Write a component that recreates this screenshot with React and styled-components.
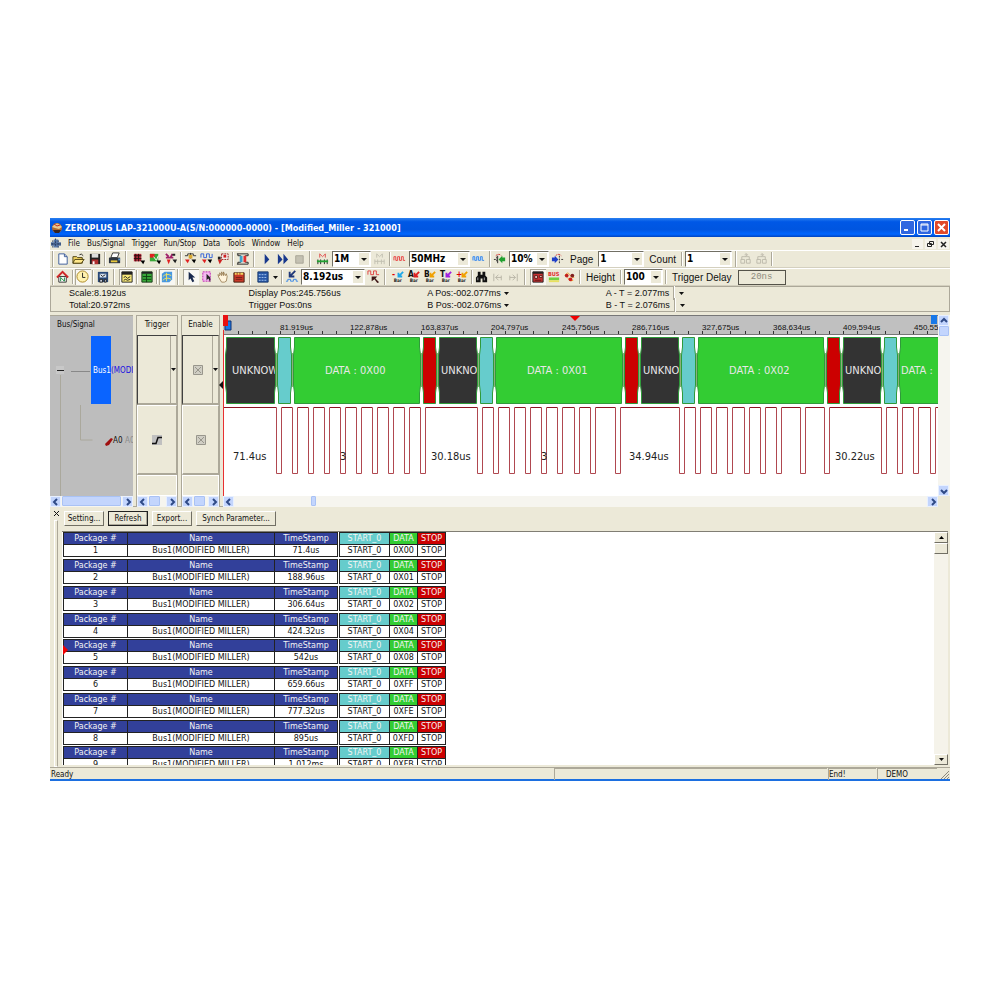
import React from 'react';
import styled, { createGlobalStyle, css } from 'styled-components';

const Colors = {
  face: '#ece9d8',
  shadow: '#aca899',
  dark: '#716f64',
  grey: '#c0c0c0',
  navy: '#32409a',
  cyan: '#66cccc',
  green: '#33cc33',
  red: '#cc0000',
  charcoal: '#333333',
  wave: '#b04850',
  waveTop: '#8c1420',
};

const Fonts = {
  ui: '"DejaVu Sans Condensed", "DejaVu Sans", sans-serif',
  wide: '"DejaVu Sans", sans-serif',
  plain: '"Liberation Sans", Arial, sans-serif',
  mono: '"Liberation Mono", monospace',
};

const GlobalStyle = createGlobalStyle`
  * {
    box-sizing: border-box;
  }
  body {
    margin: 0;
    background: #fff;
  }
  button, select, input {
    margin: 0;
    padding: 0;
    border: none;
    border-radius: 0;
    color: inherit;
    font: inherit;
    background: none;
  }
`;

const Page = styled.main`
  padding: 218px 50px;
`;

const AppWindow = styled.div`
  display: flex;
  flex-direction: column;
  background: ${Colors.face};
  border-bottom: 2px solid #1c6fe0;
  color: #111;
  font: 8px/12px ${Fonts.ui};
`;

const TitleBar = styled.header`
  display: flex;
  align-items: center;
  gap: 2px;
  height: 19px;
  padding: 0 1px;
  background: linear-gradient(#2a80f0, #0058e6 20%, #0055e0 60%, #0066ff 85%, #0044c0);
`;

const Title = styled.h1`
  flex: 1;
  margin: 0;
  color: #fff;
  font: bold 9px/16px ${Fonts.ui};
  white-space: nowrap;
`;

const CaptionButton = styled.button`
  display: flex;
  align-items: center;
  justify-content: center;
  width: 15px;
  height: 15px;
  border: 1px solid #fff;
  border-radius: 2px;
  background: ${({ $close }) => ($close ? '#e0492a' : '#2f66e0')};
`;

const MenuBar = styled.nav`
  display: flex;
  align-items: center;
  gap: 7px;
  height: 13px;
  padding: 0 1px;
`;

const MenuItem = styled.button`
  line-height: 12px;
`;

const MdiButtons = styled.div`
  display: flex;
  gap: 2px;
  margin-left: auto;
`;

const MdiButton = styled.button`
  display: flex;
  width: 11px;
  height: 10px;
  background: #f6f4ec;
`;

const Toolbar = styled.div`
  display: flex;
  align-items: center;
  height: 18px;
  border-top: 1px solid #fff;
  border-bottom: 1px solid #d4d0bf;
`;

const Grip = styled.span`
  flex: none;
  width: 2px;
  height: 16px;
  margin: 0 ${({ $tight }) => ($tight ? '1px' : '4px')} 0 2px;
  border-left: 1px solid ${Colors.shadow};
  border-right: 1px solid #fff;
`;

const Divider = styled.span`
  flex: none;
  width: 2px;
  height: 14px;
  margin: 0 1px;
  border-left: 1px solid ${Colors.shadow};
  border-right: 1px solid #fff;
`;

const ToolButton = styled.button`
  display: flex;
  flex: none;
  align-items: center;
  justify-content: center;
  width: 16px;
  height: 16px;
  ${({ $pressed }) =>
    $pressed &&
    css`
      background: #f8f7f2;
      box-shadow: inset 1px 1px ${Colors.shadow};
    `}
`;

const DropArrow = styled.button`
  display: flex;
  align-items: center;
  justify-content: center;
  width: 9px;
  height: 14px;
`;

const Combo = styled.span`
  position: relative;
  display: flex;
  flex: none;
  width: ${({ $width }) => $width}px;
  height: 16px;
  margin: 0 1px;
  border: 1px solid #fff;
  border-top-color: ${Colors.dark};
  border-left-color: ${Colors.dark};
  background: #fff;
  select {
    flex: 1;
    min-width: 0;
    padding-left: 1px;
    appearance: none;
    color: #000;
    font: bold 10px/14px ${Fonts.ui};
  }
  svg {
    position: absolute;
    top: 1px;
    right: 1px;
    pointer-events: none;
  }
`;

const ToolLabel = styled.label`
  margin: 2px 4px 0;
  font: 10px/14px ${Fonts.plain};
  white-space: nowrap;
`;

const DelayInput = styled.input`
  width: 48px;
  height: 15px;
  margin-left: 2px;
  border: 1px solid #55534a;
  color: #8c897c;
  font: 9px/12px ${Fonts.mono};
  text-align: center;
`;

const InfoBar = styled.section`
  display: grid;
  grid-template-columns: 180fr 179fr 179fr 344fr;
  height: 26px;
  padding: 0 0 0 18px;
  border: 1px solid ${Colors.shadow};
  font: 9px/12px ${Fonts.plain};
  white-space: nowrap;
`;

const InfoCell = styled.div`
  display: flex;
  align-items: center;
  gap: 3px;
  height: 12px;
`;

const Workspace = styled.section`
  display: grid;
  grid-template-columns: 83px 42px 39px 1fr;
  gap: 3px;
  height: 195px;
  padding-top: 3px;
  border-bottom: 1px solid ${Colors.shadow};
`;

const Pane = styled.div`
  display: flex;
  flex-direction: column;
  min-width: 0;
  overflow: hidden;
  background: ${({ $grey }) => ($grey ? '#bdbdbd' : Colors.face)};
  border-left: ${({ $grey }) => ($grey ? 'none' : `1px solid ${Colors.shadow}`)};
  border-right: ${({ $grey }) => ($grey ? 'none' : `1px solid ${Colors.shadow}`)};
`;

const PaneHead = styled.div`
  flex: none;
  height: 20px;
  padding: ${({ $left }) => ($left ? '0 7px' : 0)};
  border-top: 1px solid ${Colors.shadow};
  font: 8px/18px ${Fonts.ui};
  text-align: ${({ $left }) => ($left ? 'left' : 'center')};
`;

const SignalCell = styled.div`
  display: flex;
  flex: none;
  align-items: center;
  justify-content: center;
  height: 70px;
  border: 1px solid #fff;
  border-right-color: ${Colors.shadow};
  border-bottom: 2px solid ${Colors.shadow};
  ${({ $sunken }) =>
    $sunken &&
    css`
      border-top-color: #404040;
      border-left-color: #404040;
    `}
`;

const CellValue = styled.div`
  display: flex;
  flex: 1;
  align-items: center;
  justify-content: center;
  align-self: stretch;
  border-right: 1px solid ${Colors.shadow};
`;

const EmptyCell = styled.div`
  flex: 1;
  border: 1px solid #fff;
`;

const BusTree = styled.svg`
  display: block;
  flex: 1;
  width: 100%;
`;

const ScrollBar = styled.div`
  display: flex;
  flex: none;
  flex-direction: ${({ $vertical }) => ($vertical ? 'column' : 'row')};
  ${({ $vertical }) => ($vertical ? 'width: 12px;' : 'height: 11px;')}
  background: #f6f5ef;
`;

const ScrollArrow = styled.button`
  display: flex;
  flex: none;
  align-items: center;
  justify-content: center;
  width: 11px;
  height: 11px;
  border: 1px solid #e8f0ff;
  background: #c3d5fd;
`;

const ScrollTrack = styled.div`
  display: flex;
  flex: 1;
  padding: 0 1px;
`;

const ScrollThumb = styled.div`
  width: ${({ $width }) => $width};
  height: 10px;
  margin-left: ${({ $start }) => $start || '0'};
  border: 1px solid #a9c2f5;
  border-radius: 1px;
  background: #c3d5fd;
`;

const WavePane = styled.div`
  position: relative;
  display: flex;
  flex-direction: column;
  min-width: 0;
  background: #fff;
`;

const PaneHandle = styled.svg`
  position: absolute;
  top: 66px;
  left: -4px;
`;

const WaveBody = styled.div`
  display: flex;
  flex: 1;
  min-height: 0;
`;

const WaveChart = styled.svg`
  display: block;
  flex: 1;
  min-width: 0;
  height: 181px;
  overflow: hidden;
`;

const Corner = styled.span`
  flex: none;
  width: 12px;
  background: ${Colors.face};
`;

const PacketPanel = styled.section`
  display: grid;
  grid-template-columns: 12px 1fr;
  height: 260px;
  padding-top: 4px;
`;

const DockEdge = styled.div`
  display: flex;
  flex-direction: column;
  align-items: center;
`;

const DockClose = styled.button`
  display: flex;
  justify-content: center;
  width: 10px;
  height: 9px;
`;

const DockGrip = styled.span`
  flex: 1;
  width: 4px;
  border: 1px solid #fff;
  border-right-color: ${Colors.shadow};
`;

const PacketMain = styled.div`
  display: flex;
  flex-direction: column;
  min-width: 0;
`;

const ButtonRow = styled.div`
  display: flex;
  gap: 4px;
  padding: 0 2px 5px;
`;

const PushButton = styled.button`
  width: ${({ $wide }) => ($wide ? '80px' : '40px')};
  height: 15px;
  border: 1px solid #fff;
  border-right-color: ${Colors.dark};
  border-bottom-color: ${Colors.dark};
  line-height: 13px;
  white-space: nowrap;
  ${({ $default }) =>
    $default &&
    css`
      border-color: #222;
      box-shadow: inset -1px -1px ${Colors.shadow};
    `}
`;

const PacketArea = styled.div`
  display: flex;
  height: 234px;
  margin-right: 2px;
  border-top: 1px solid #807e74;
`;

const PacketList = styled.div`
  flex: 1;
  padding-left: 1px;
  overflow: hidden;
  background: #fff;
`;

const Packet = styled.div`
  position: relative;
  display: flex;
  gap: 1px;
  height: 25px;
  margin-bottom: 2px;
  &:nth-child(4n) {
    margin-bottom: 1px;
  }
`;

const PacketMark = styled.svg`
  position: absolute;
  top: 6px;
  left: 0;
`;

const PacketTable = styled.table`
  width: ${({ $width }) => $width}px;
  height: 25px;
  border-collapse: collapse;
  table-layout: fixed;
  border: 1px solid #222;
  font: 8px/11px ${Fonts.wide};
  text-align: center;
  white-space: nowrap;
  td {
    padding: 0;
    border: 1px solid #222;
    background: #fff;
  }
`;

const HeadCell = styled.th`
  width: ${({ $width }) => $width}px;
  padding: 0;
  border: 1px solid #222;
  background: ${({ $color }) => $color || Colors.navy};
  color: #f4f4f4;
  font-weight: normal;
`;

const ClassicScroll = styled.div`
  display: flex;
  flex-direction: column;
  width: 14px;
  background: #f5f3ea;
`;

const ClassicButton = styled.button`
  display: flex;
  align-items: center;
  justify-content: center;
  width: 14px;
  height: 11px;
  border: 1px solid #fff;
  border-right-color: ${Colors.dark};
  border-bottom-color: ${Colors.dark};
  background: ${Colors.face};
  &:last-child {
    margin-top: auto;
  }
`;

const StatusBar = styled.footer`
  display: grid;
  grid-template-columns: 1fr 273px 48px 60px 12px;
  gap: 1px;
  height: 12px;
  border-top: 1px solid ${Colors.shadow};
`;

const StatusCell = styled.div`
  padding-left: ${({ $indent }) => ($indent ? '8px' : 0)};
  border-left: 1px solid ${({ $flat }) => ($flat ? 'transparent' : Colors.shadow)};
  border-top: 1px solid ${({ $flat }) => ($flat ? 'transparent' : Colors.shadow)};
  line-height: 11px;
`;

const BAR_ICONS = {
  barMinus: ['-', '#e00000', '#20a8e8'],
  barA: ['A', '#111', '#e02020'],
  barB: ['B', '#111', '#f0a000'],
  barT: ['T', '#111', '#a020e0'],
  barPlus: ['+', '#e00000', '#f0a000'],
};

const squareWave = 'M1 9V5h2v4h2V5h2v4h2V5h2v4h2';

const ICONS = {
  fresh: (
    <g>
      <path d="M3 2h6l3 3v8H3z" fill="#fff" stroke="#3a5a98" />
      <path d="M9 2v3h3" fill="none" stroke="#3a5a98" />
    </g>
  ),
  open: (
    <g>
      <path d="M1 5h4l1 1h5v6H1z" fill="#f5d866" stroke="#4a4010" />
      <path d="M3 8h10l-3 4H1z" fill="#ffe88a" stroke="#4a4010" />
      <path d="M8 3q2-2 4 1" fill="none" stroke="#222" />
    </g>
  ),
  save: (
    <g>
      <path d="M2 2h11v11H2z" fill="#222" />
      <path d="M4 2h7v4H4z" fill="#ddd" />
      <path d="M4 8h7v5H4z" fill="#b03030" />
      <path d="M5 10h2v3H5z" fill="#fff" />
    </g>
  ),
  print: (
    <g>
      <path d="M5 1h7l-2 5H3z" fill="#fff" stroke="#333" />
      <path d="M1 6h12v6H1z" fill="#2c3440" />
      <path d="M3 9h7v2H3z" fill="#e8c83c" />
      <path d="M11 7h2v2h-2z" fill="#5898d0" />
    </g>
  ),
  sampling: (
    <g>
      <path d="M2 2h8v8H2z" fill="#b02838" />
      <path d="M2 4h8M2 7h8M4 2v8M7 2v8" stroke="#2a1010" />
      <path d="M9 9h5l-2 4z" fill="#000" />
    </g>
  ),
  trigProp: (
    <g>
      <path d="M2 2h9v8H2z" fill="#3aa838" />
      <path d="M2 2h5v4H2z" fill="#e02020" />
      <path d="M6 5l3 4 2-5" fill="none" stroke="#fff" />
      <path d="M9 9h5l-2 4z" fill="#000" />
    </g>
  ),
  busProp: (
    <g>
      <path d="M2 2l3 3M9 2L7 6M2 6h8" stroke="#a02068" strokeWidth="2" />
      <path d="M3 8h4l-2 5z" fill="#e02020" />
      <path d="M9 2h3v2H9zM9 8h5l-2 4z" fill="#222" />
    </g>
  ),
  trigLow: (
    <g>
      <path d="M1 4h3V2h6v2h3M7 1v6" fill="none" stroke="#333" />
      <path d="M5 3h4v4H5z" fill="#d8a830" />
      <path d="M1 8h5l-2 4z" fill="#e02020" />
      <path d="M8 8h5l-2 4z" fill="#000" />
    </g>
  ),
  trigWave: (
    <g>
      <path d="M1 6V2h3v4h3V2h3v4h3V2" fill="none" stroke="#3060d8" />
      <path d="M2 8h5l-2 4z" fill="#e02020" />
      <path d="M8 8h5l-2 4z" fill="#000" />
    </g>
  ),
  trigWidth: (
    <g>
      <path d="M6 2h7v6H6z" fill="#f4f4f4" stroke="#902020" strokeDasharray="2 1" />
      <path d="M8 3h3v3H8z" fill="#d02020" />
      <path d="M2 8h5l-3 5z" fill="#d02020" />
      <path d="M2 5h3v3H2z" fill="#222" />
    </g>
  ),
  compare: (
    <g>
      <path d="M1 2h12M1 13h12M2 2v2h3v7H2v2M13 2v2h-3v7h3v2" fill="none" stroke="#222" />
      <path d="M4 4h3v7H4z" fill="#40a0c8" />
      <path d="M8 4h3v7H8z" fill="#e03030" />
    </g>
  ),
  play: <path d="M5 2v11l5-5z" fill="#18388c" />,
  forward: <path d="M2 2v11l5-5zM8 2v11l5-5z" fill="#18388c" />,
  stop: <path d="M4 4h8v8H4z" fill="#c4c1b2" stroke="#a8a596" />,
  ram: (
    <g>
      <path d="M4 6V2l3 3 3-3v4" fill="none" stroke="#e05050" />
      <path d="M2 8v5M5 8v5M9 8v5M12 8v5" stroke="#222" />
      <path d="M1 10h12" stroke="#20a030" strokeWidth="2" />
    </g>
  ),
  ramOff: (
    <g fill="none" stroke="#c2bfb0">
      <path d="M4 6V2l3 3 3-3v4M2 8v5M5 8v5M9 8v5M12 8v5M2 10h10" />
    </g>
  ),
  waveRed: <path d={squareWave} fill="none" stroke="#e84040" />,
  waveBlue: <path d={squareWave} fill="#b8d8ff" stroke="#3888e8" />,
  zoomIn: (
    <g>
      <path d="M3 4q3-3 6 0" fill="none" stroke="#d02020" strokeDasharray="2 1" />
      <path d="M1 8h3M4 5v6" stroke="#333" strokeDasharray="2 1" />
      <path d="M6 8l4-4v2h3v4h-3v2z" fill="#20a030" />
      <path d="M5 4v8" stroke="#222" />
    </g>
  ),
  zoomOut: (
    <g>
      <path d="M5 4q3-3 6 0" fill="none" stroke="#d02020" strokeDasharray="2 1" />
      <path d="M8 8L4 4v2H1v4h3v2z" fill="#2040c8" />
      <path d="M9 4v8M11 8h2" stroke="#333" strokeDasharray="2 1" />
    </g>
  ),
  findOff: (
    <g fill="none" stroke="#bcb9aa">
      <path d="M2 8h4v4H2zM8 8h4v4H8zM3 8V5h8v3" />
      <path d="M6 3h3M7 1l2 2-2 2" />
    </g>
  ),
  home: (
    <g>
      <path d="M3 7h8v6H3z" fill="#fff" stroke="#333" />
      <path d="M1 8l6-6 6 6" fill="none" stroke="#d02828" strokeWidth="2" />
      <path d="M5 12V8l4 4V8" fill="none" stroke="#108838" />
    </g>
  ),
  clock: (
    <g>
      <circle cx="7" cy="7" r="6" fill="#fff2b0" stroke="#a88420" />
      <path d="M7 3v5h3" fill="none" stroke="#222" />
    </g>
  ),
  monitor: (
    <g>
      <path d="M2 2h11v11H2z" fill="#284878" />
      <path d="M4 4h7v4H4z" fill="#d8e4f0" />
      <path d="M5 5l2 2 3-2M4 10h3v3H4zM9 10h2v3H9z" fill="#c8d0e0" stroke="#222" />
    </g>
  ),
  waveWindow: (
    <g>
      <path d="M2 2h11v11H2z" fill="#f8e878" stroke="#222" />
      <path d="M2 2h11v3H2z" fill="#222" />
      <path d="M4 8l2-1 2 2 3-2M4 11l2-1 2 1 3-1" fill="none" stroke="#222" />
    </g>
  ),
  listWindow: (
    <g>
      <path d="M2 2h11v11H2z" fill="#38a838" stroke="#183818" />
      <path d="M2 2h11v2H2z" fill="#222" />
      <path d="M3 7h9M3 10h9M7 4v9" stroke="#104010" />
    </g>
  ),
  navigator: (
    <g>
      <path d="M2 4l3-2h8v8l-3 3H2z" fill="#4898e0" />
      <path d="M3 7q4-4 9-1M3 11q4-4 9-1M7 3v9" fill="none" stroke="#f0e060" />
    </g>
  ),
  cursor: <path d="M5 2v9l2-2 2 4 2-1-2-4h3z" fill="#18284c" />,
  area: (
    <g>
      <path d="M3 2h8v10H3z" fill="#f4b8f0" stroke="#c020b0" strokeDasharray="2 1" />
      <path d="M7 4v7l2-2 2 4V8z" fill="#222" />
    </g>
  ),
  hand: (
    <path
      d="M3 8L2 5l2 1V3l2 3V2l2 4V2l2 4 1-2 1 3-1 5-2 1H6z"
      fill="#fff4dc"
      stroke="#806030"
      strokeWidth="0.7"
    />
  ),
  memo: (
    <g>
      <path d="M2 3h11v10H2z" fill="#c83828" stroke="#402010" />
      <path d="M3 3h2v2H3zM6 3h2v2H6zM9 3h3v2H9z" fill="#f0d860" />
      <path d="M4 8h7M4 10h7" stroke="#702018" />
    </g>
  ),
  grid: (
    <g>
      <path d="M2 2h11v11H2z" fill="#2858a8" stroke="#183868" />
      <path d="M3 5h9M3 8h9M3 11h9" stroke="#a8c8f0" strokeDasharray="2 1" />
    </g>
  ),
  jump: (
    <g>
      <path d="M11 1L6 6M5 2v5h5" fill="none" stroke="#203878" strokeWidth="2" />
      <path d="M1 12h2v-2h3v2h3v-2h3v2h2" fill="none" stroke="#3888e8" />
    </g>
  ),
  jumpBack: (
    <g>
      <path d="M1 5V1h3v4h3V1h3v4h3" fill="none" stroke="#e04040" />
      <path d="M5 7h6L9 9l4 4-2 1-3-4-3 2z" fill="#401818" />
    </g>
  ),
  find: (
    <g fill="#111">
      <path d="M3 2h3v3h2V2h3v4l2 2v5H8V9H6v4H1V8l2-2z" />
      <path d="M3 8v3M10 8v3" stroke="#aaa" />
    </g>
  ),
  prevOff: <path d="M3 4v8M5 8h6M8 5L5 8l3 3M11 6v5" fill="none" stroke="#b8b5a6" />,
  nextOff: <path d="M11 4v8M3 8h6M6 5l3 3-3 3M3 6v5" fill="none" stroke="#b8b5a6" />,
  packets: (
    <g>
      <path d="M2 2h11v11H2z" fill="#c83030" stroke="#222" />
      <path d="M2 2h11v2H2z" fill="#222" />
      <path d="M4 6h3v3H4zM9 6h3v2H9zM4 11h7" fill="#f0c8c0" stroke="#601818" />
    </g>
  ),
  bus: (
    <g>
      <text x="1" y="6" fontSize="6" fontWeight="bold" fill="#e03030">BUS</text>
      <path d="M2 8h11v3H2z" fill="#70d040" />
      <path d="M2 11h11v2H2z" fill="#e8e060" />
    </g>
  ),
  nodes: (
    <g>
      <path d="M2 6q3-5 5-1t5 3M5 8q2 5 6 3" fill="none" stroke="#f0a030" />
      <circle cx="4" cy="6" r="2" fill="#c02020" />
      <circle cx="10" cy="6" r="2" fill="#802020" />
      <circle cx="8" cy="10" r="2" fill="#d02020" />
    </g>
  ),
};

Object.entries(BAR_ICONS).forEach(([name, [letter, ink, arrow]]) => {
  ICONS[name] = (
    <g>
      <text x="1" y="8" fontSize="9" fontWeight="bold" fill={ink}>{letter}</text>
      <path d="M13 2L9 6M8 3v4h4" fill="none" stroke={arrow} strokeWidth="2" />
      <text x="3" y="13" fontSize="5" fontWeight="bold" fill="#222">Bar</text>
    </g>
  );
});

const Tool = ({ name, label, pressed }) => (
  <ToolButton type="button" aria-label={label || name} $pressed={pressed}>
    <svg width="14" height="14" viewBox="0 0 15 15" aria-hidden="true">
      {ICONS[name]}
    </svg>
  </ToolButton>
);

const DownArrow = () => (
  <svg width="5" height="3" viewBox="0 0 5 3" aria-hidden="true">
    <path d="M0 0h5L2.5 3z" fill="#111" />
  </svg>
);

const ComboBox = ({ id, label, value, width }) => (
  <Combo $width={width}>
    <select id={id} aria-label={label} defaultValue={value}>
      <option>{value}</option>
    </select>
    <svg width="10" height="12" viewBox="0 0 10 12" aria-hidden="true">
      <path d="M0 0h10v12H0z" fill={Colors.face} />
      <path d="M2 5h6L5 8z" fill="#111" />
    </svg>
  </Combo>
);

const ARROWS = {
  left: 'M5 1L2 4l3 3',
  right: 'M3 1l3 3-3 3',
  up: 'M1 5l3-3 3 3',
  down: 'M1 3l3 3 3-3',
};

const Arrow = ({ to }) => (
  <ScrollArrow type="button" aria-label={`Scroll ${to}`}>
    <svg width="8" height="8" viewBox="0 0 8 8" aria-hidden="true">
      <path d={ARROWS[to]} fill="none" stroke="#2f4a86" strokeWidth="2" />
    </svg>
  </ScrollArrow>
);

const HScroll = ({ thumb, start }) => (
  <ScrollBar>
    <Arrow to="left" />
    <ScrollTrack>
      <ScrollThumb $width={thumb} $start={start} />
    </ScrollTrack>
    <Arrow to="right" />
  </ScrollBar>
);

const CheckedCell = () => (
  <svg width="10" height="10" viewBox="0 0 10 10" aria-hidden="true">
    <path d="M0.5 0.5h9v9h-9z" fill="#d0cec4" stroke="#98968c" />
    <path d="M2 2l6 6M8 2L2 8" stroke="#98968c" />
  </svg>
);

const EdgeIcon = () => (
  <svg width="10" height="10" viewBox="0 0 10 10" aria-hidden="true">
    <path d="M0 0h10v10H0z" fill="#c0c0c0" />
    <path d="M0 8.5h4l2-6h4" fill="none" stroke="#111" strokeWidth="1.5" />
  </svg>
);

// x positions are measured from the left edge of the wave chart
const SEGMENTS = [
  { x: 2, w: 50, type: 'unknown', text: 'UNKNOW', textX: 9 },
  { x: 54, w: 14, type: 'start' },
  { x: 70, w: 127, type: 'data', text: 'DATA : 0X00', textX: 102 },
  { x: 199, w: 14, type: 'stop' },
  { x: 215, w: 39, type: 'unknown', text: 'UNKNO', textX: 218 },
  { x: 256, w: 14, type: 'start' },
  { x: 272, w: 127, type: 'data', text: 'DATA : 0X01', textX: 304 },
  { x: 401, w: 14, type: 'stop' },
  { x: 417, w: 39, type: 'unknown', text: 'UNKNO', textX: 420 },
  { x: 458, w: 14, type: 'start' },
  { x: 474, w: 127, type: 'data', text: 'DATA : 0X02', textX: 506 },
  { x: 603, w: 14, type: 'stop' },
  { x: 619, w: 39, type: 'unknown', text: 'UNKNO', textX: 622 },
  { x: 660, w: 14, type: 'start' },
  { x: 676, w: 127, type: 'data', text: 'DATA :', textX: 678 },
];

const SEGMENT_COLORS = {
  unknown: Colors.charcoal,
  start: Colors.cyan,
  data: Colors.green,
  stop: Colors.red,
};

const PULSES = [
  53, 69, 85, 101, 117, 133, 149, 165, 181, 197, 254, 270, 286, 302, 318, 334,
  351, 367, 392, 456, 472, 488, 504, 521, 537, 553, 577, 601, 658, 674, 690, 707,
];

const GAPS = [
  [10, '71.4us'],
  [117, '3'],
  [208, '30.18us'],
  [318, '3'],
  [406, '34.94us'],
  [612, '30.22us'],
];

const TIMES = [
  '81.919us', '122.878us', '163.837us', '204.797us', '245.756us',
  '286.716us', '327.675us', '368.634us', '409.594us', '450.55',
];

const signalPath = `M1 92.5${PULSES.map((x) => `H${x}.5V158.5h5V92.5`).join('')}H1200`;
const highPath = `M1 92.5${PULSES.map((x) => `H${x}M${x + 6} 92.5`).join('')}H1200`;

const Segment = ({ x, w, type, text, textX }) => {
  const r = x + w;
  return (
    <g>
      <path
        d={`M${x + 1}.5 22.5H${r - 1}.5V32L${r}.5 40V70L${r - 1}.5 78V88.5H${x + 1}.5V78L${x}.5 70V40L${x + 1}.5 32z`}
        fill={SEGMENT_COLORS[type]}
        stroke="#2f9a3a"
      />
      <path d={`M${r + 1}.5 38v34`} stroke="#8cae7c" />
      {text && (
        <svg x={x} y="22" width={w} height="66" overflow="hidden">
          <text x={textX - x} y="37" fill="#e8e8e8">{text}</text>
        </svg>
      )}
    </g>
  );
};

const Waveform = () => (
  <WaveChart fontFamily={Fonts.ui} fontSize="11">
    <rect width="100%" height="20" fill={Colors.grey} />
    <path d="M0 .5h1200M0 19.5h1200" stroke="#777" />
    {Array.from({ length: 80 }, (_, i) => (
      <path key={i} d={`M${Math.round(15 + i * 14.07)}.5 16v3`} stroke="#333" />
    ))}
    <g fontFamily={Fonts.plain} fontSize="8" fill="#111">
      {TIMES.map((time, i) => (
        <text key={time} x={Math.round(57 + i * 70.4)} y="15">{time}</text>
      ))}
    </g>
    <path d="M2 6h6v9H2z" fill="#1878e8" stroke="#103070" />
    <path d="M0 0h5v11H0z" fill="#e81010" />
    <path d="M347 1h10l-5 5z" fill="#f00000" />
    <path d="M708 0h6v9h-6z" fill="#1878e8" />
    {SEGMENTS.map((segment) => (
      <Segment key={segment.x} {...segment} />
    ))}
    <path d={signalPath} fill="none" stroke={Colors.wave} />
    <path d={highPath} stroke={Colors.waveTop} />
    {GAPS.map(([x, text]) => (
      <text key={x} x={x} y="145" fill="#222">{text}</text>
    ))}
    <path d="M.5 15v166" stroke="#e83030" />
  </WaveChart>
);

const PACKETS = [
  ['1', '71.4us', '0X00'],
  ['2', '188.96us', '0X01'],
  ['3', '306.64us', '0X02'],
  ['4', '424.32us', '0X04'],
  ['5', '542us', '0X08'],
  ['6', '659.66us', '0XFF'],
  ['7', '777.32us', '0XFE'],
  ['8', '895us', '0XFD'],
  ['9', '1.012ms', '0XFB'],
];

const PacketRow = ({ id, time, data }) => (
  <Packet>
    <PacketTable $width={275}>
      <thead>
        <tr>
          <HeadCell $width={64}>Package #</HeadCell>
          <HeadCell $width={147}>Name</HeadCell>
          <HeadCell>TimeStamp</HeadCell>
        </tr>
      </thead>
      <tbody>
        <tr>
          <td>{id}</td>
          <td>Bus1(MODIFIED MILLER)</td>
          <td>{time}</td>
        </tr>
      </tbody>
    </PacketTable>
    <PacketTable $width={107}>
      <thead>
        <tr>
          <HeadCell $width={50} $color={Colors.cyan}>START_0</HeadCell>
          <HeadCell $width={28} $color={Colors.green}>DATA</HeadCell>
          <HeadCell $color={Colors.red}>STOP</HeadCell>
        </tr>
      </thead>
      <tbody>
        <tr>
          <td>START_0</td>
          <td>{data}</td>
          <td>STOP</td>
        </tr>
      </tbody>
    </PacketTable>
    {id === '5' && (
      <PacketMark width="5" height="10" viewBox="0 0 5 10">
        <path d="M0 0l5 5-5 5z" fill="#f00000" />
      </PacketMark>
    )}
  </Packet>
);

const MENUS = ['File', 'Bus/Signal', 'Trigger', 'Run/Stop', 'Data', 'Tools', 'Window', 'Help'];

const App = () => (
  <Page>
    <GlobalStyle />
    <AppWindow>
      <TitleBar>
        <svg width="12" height="12" viewBox="0 0 12 12" aria-hidden="true">
          <circle cx="6" cy="6" r="5" fill="#b06a30" />
          <path d="M1 5q5-7 10 0L8 7 4 6z" fill="#e8c890" />
          <path d="M2 8h8l-2 3H4z" fill="#382420" />
          <path d="M3 2l3 2 3-1" stroke="#c03020" fill="none" />
        </svg>
        <Title>ZEROPLUS LAP-321000U-A(S/N:000000-0000) - [Modified_Miller - 321000]</Title>
        <CaptionButton type="button" aria-label="Minimize">
          <svg width="11" height="11" viewBox="0 0 11 11"><path d="M2 7h4v2H2z" fill="#fff" /></svg>
        </CaptionButton>
        <CaptionButton type="button" aria-label="Maximize">
          <svg width="11" height="11" viewBox="0 0 11 11">
            <path d="M2 2h7v7H2zM2 3h7" fill="none" stroke="#fff" />
          </svg>
        </CaptionButton>
        <CaptionButton type="button" aria-label="Close" $close>
          <svg width="11" height="11" viewBox="0 0 11 11">
            <path d="M2 2l7 7M9 2L2 9" stroke="#fff" strokeWidth="2" />
          </svg>
        </CaptionButton>
      </TitleBar>
      <MenuBar>
        <svg width="10" height="11" viewBox="0 0 11 11" aria-hidden="true">
          <path d="M0 4h3V1h5v3h3v4H8v2H3V8H0z" fill="#5878a8" />
          <path d="M2 2v8M5 0v9M8 2v8M0 6h11" stroke="#2a3c5c" strokeDasharray="2 1" />
        </svg>
        {MENUS.map((menu) => (
          <MenuItem key={menu} type="button">{menu}</MenuItem>
        ))}
        <MdiButtons>
          <MdiButton type="button" aria-label="Minimize document">
            <svg width="11" height="10"><path d="M3 7.5h4" stroke="#222" /></svg>
          </MdiButton>
          <MdiButton type="button" aria-label="Restore document">
            <svg width="11" height="10">
              <path d="M4.5 2.5h4v3h-4zM2.5 4.5h4v3h-4z" fill="none" stroke="#222" />
            </svg>
          </MdiButton>
          <MdiButton type="button" aria-label="Close document">
            <svg width="11" height="10"><path d="M3 3l5 5M8 3L3 8" stroke="#222" strokeWidth="1.5" /></svg>
          </MdiButton>
        </MdiButtons>
      </MenuBar>

      <Toolbar>
        <Grip $tight />
        <Tool name="fresh" label="New" />
        <Tool name="open" />
        <Tool name="save" />
        <Divider />
        <Tool name="print" />
        <Grip />
        <Tool name="sampling" />
        <Tool name="trigProp" />
        <Tool name="busProp" />
        <Divider />
        <Tool name="trigLow" />
        <Tool name="trigWave" />
        <Tool name="trigWidth" />
        <Divider />
        <Tool name="compare" />
        <Grip />
        <Tool name="play" />
        <Tool name="forward" />
        <Tool name="stop" />
        <Grip />
        <Tool name="ram" />
        <ComboBox label="Memory depth" value="1M" width={39} />
        <Tool name="ramOff" />
        <Divider />
        <Tool name="waveRed" />
        <ComboBox label="Sample rate" value="50MHz" width={61} />
        <Tool name="waveBlue" />
        <Grip $tight />
        <Tool name="zoomIn" />
        <ComboBox label="Trigger position" value="10%" width={40} />
        <Tool name="zoomOut" />
        <ToolLabel htmlFor="page">Page</ToolLabel>
        <ComboBox id="page" value="1" width={46} />
        <ToolLabel htmlFor="count">Count</ToolLabel>
        <Divider />
        <ComboBox id="count" value="1" width={47} />
        <Grip $tight />
        <Tool name="findOff" label="Find previous" />
        <Tool name="findOff" label="Find next" />
        <Divider />
      </Toolbar>
      <Toolbar>
        <Grip $tight />
        <Tool name="home" />
        <Divider />
        <Tool name="clock" pressed />
        <Divider />
        <Tool name="monitor" />
        <Grip />
        <Tool name="waveWindow" pressed />
        <Divider />
        <Tool name="listWindow" />
        <Divider />
        <Tool name="navigator" pressed />
        <Grip />
        <Tool name="cursor" pressed />
        <Tool name="area" />
        <Tool name="hand" />
        <Tool name="memo" />
        <Grip />
        <Tool name="grid" />
        <DropArrow type="button" aria-label="Grid options"><DownArrow /></DropArrow>
        <Divider />
        <Tool name="jump" />
        <ComboBox label="Scale" value="8.192us" width={64} />
        <Tool name="jumpBack" />
        <Grip />
        <Tool name="barMinus" />
        <Tool name="barA" />
        <Tool name="barB" />
        <Tool name="barT" />
        <Tool name="barPlus" />
        <Divider />
        <Tool name="find" />
        <Tool name="prevOff" />
        <Tool name="nextOff" />
        <Grip />
        <Tool name="packets" pressed />
        <Tool name="bus" />
        <Tool name="nodes" />
        <Divider />
        <ToolLabel htmlFor="height">Height</ToolLabel>
        <Divider />
        <ComboBox id="height" value="100" width={39} />
        <Divider />
        <ToolLabel htmlFor="delay">Trigger Delay</ToolLabel>
        <DelayInput id="delay" defaultValue="20ns" />
      </Toolbar>

      <InfoBar>
        <InfoCell>Scale:8.192us</InfoCell>
        <InfoCell>Display Pos:245.756us</InfoCell>
        <InfoCell>A Pos:-002.077ms<DownArrow /></InfoCell>
        <InfoCell>A - T = 2.077ms<Divider /><DownArrow /></InfoCell>
        <InfoCell>Total:20.972ms</InfoCell>
        <InfoCell>Trigger Pos:0ns</InfoCell>
        <InfoCell>B Pos:-002.076ms<DownArrow /></InfoCell>
        <InfoCell>B - T = 2.076ms<Divider /><DownArrow /></InfoCell>
      </InfoBar>

      <Workspace>
        <Pane $grey>
          <PaneHead $left>Bus/Signal</PaneHead>
          <BusTree height="161" fontFamily={Fonts.ui} fontSize="8">
            <path d="M10.5 40v122M30.5 70v35h12" fill="none" stroke="#aaa89c" />
            <path d="M6 31h8v8H6z" fill="#c8c8c8" />
            <path d="M7 35.5h7" stroke="#222" />
            <path d="M21 36.5h19" stroke="#888" />
            <path d="M41 1h20v68H41z" fill="#0a64ff" />
            <text x="43" y="38" fill="#fff">Bus1</text>
            <text x="61" y="38" fill="#1a10e0">(MODI</text>
            <path d="M55 109l6-6 2 1-4 6-3 1z" fill="#a01010" />
            <text x="63" y="108" fill="#111">A0</text>
            <text x="75" y="108" fill="#8c8c8c">A0</text>
          </BusTree>
          <HScroll thumb="100%" />
        </Pane>
        <Pane>
          <PaneHead>Trigger</PaneHead>
          <SignalCell $sunken>
            <CellValue />
            <DownArrow />
          </SignalCell>
          <SignalCell><EdgeIcon /></SignalCell>
          <EmptyCell />
          <HScroll thumb="11px" />
        </Pane>
        <Pane>
          <PaneHead>Enable</PaneHead>
          <SignalCell $sunken>
            <CellValue><CheckedCell /></CellValue>
            <DownArrow />
          </SignalCell>
          <SignalCell><CheckedCell /></SignalCell>
          <EmptyCell />
          <HScroll thumb="11px" />
        </Pane>
        <WavePane>
          <WaveBody>
            <Waveform />
            <ScrollBar $vertical>
              <Arrow to="up" />
              <ScrollTrack>
                <ScrollThumb $width="10px" />
              </ScrollTrack>
              <Arrow to="down" />
            </ScrollBar>
          </WaveBody>
          <ScrollBar>
            <Arrow to="left" />
            <ScrollTrack>
              <ScrollThumb $width="5px" $start="11%" />
            </ScrollTrack>
            <Arrow to="right" />
            <Corner />
          </ScrollBar>
          <PaneHandle width="4" height="8" viewBox="0 0 4 8" aria-hidden="true">
            <path d="M4 0v8L0 4z" fill="#111" />
          </PaneHandle>
        </WavePane>
      </Workspace>

      <PacketPanel>
        <DockEdge>
          <DockClose type="button" aria-label="Close panel">
            <svg width="5" height="5" viewBox="0 0 5 5"><path d="M0 0l5 5M5 0L0 5" stroke="#111" /></svg>
          </DockClose>
          <DockGrip />
        </DockEdge>
        <PacketMain>
          <ButtonRow>
            <PushButton type="button">Setting...</PushButton>
            <PushButton type="button" $default>Refresh</PushButton>
            <PushButton type="button">Export...</PushButton>
            <PushButton type="button" $wide>Synch Parameter...</PushButton>
          </ButtonRow>
          <PacketArea>
            <PacketList>
              {PACKETS.map(([id, time, data]) => (
                <PacketRow key={id} id={id} time={time} data={data} />
              ))}
            </PacketList>
            <ClassicScroll>
              <ClassicButton type="button" aria-label="Up">
                <svg width="5" height="3" viewBox="0 0 5 3"><path d="M0 3h5L2.5 0z" /></svg>
              </ClassicButton>
              <ClassicButton type="button" aria-label="Position" />
              <ClassicButton type="button" aria-label="Down"><DownArrow /></ClassicButton>
            </ClassicScroll>
          </PacketArea>
        </PacketMain>
      </PacketPanel>

      <StatusBar>
        <StatusCell $flat>Ready</StatusCell>
        <StatusCell />
        <StatusCell>End!</StatusCell>
        <StatusCell $indent>DEMO</StatusCell>
        <svg width="12" height="11" viewBox="0 0 12 11" aria-hidden="true">
          <path d="M3 11l8-8M6 11l5-5M9 11l2-2" stroke="#8c897c" />
        </svg>
      </StatusBar>
    </AppWindow>
  </Page>
);

export default App;
